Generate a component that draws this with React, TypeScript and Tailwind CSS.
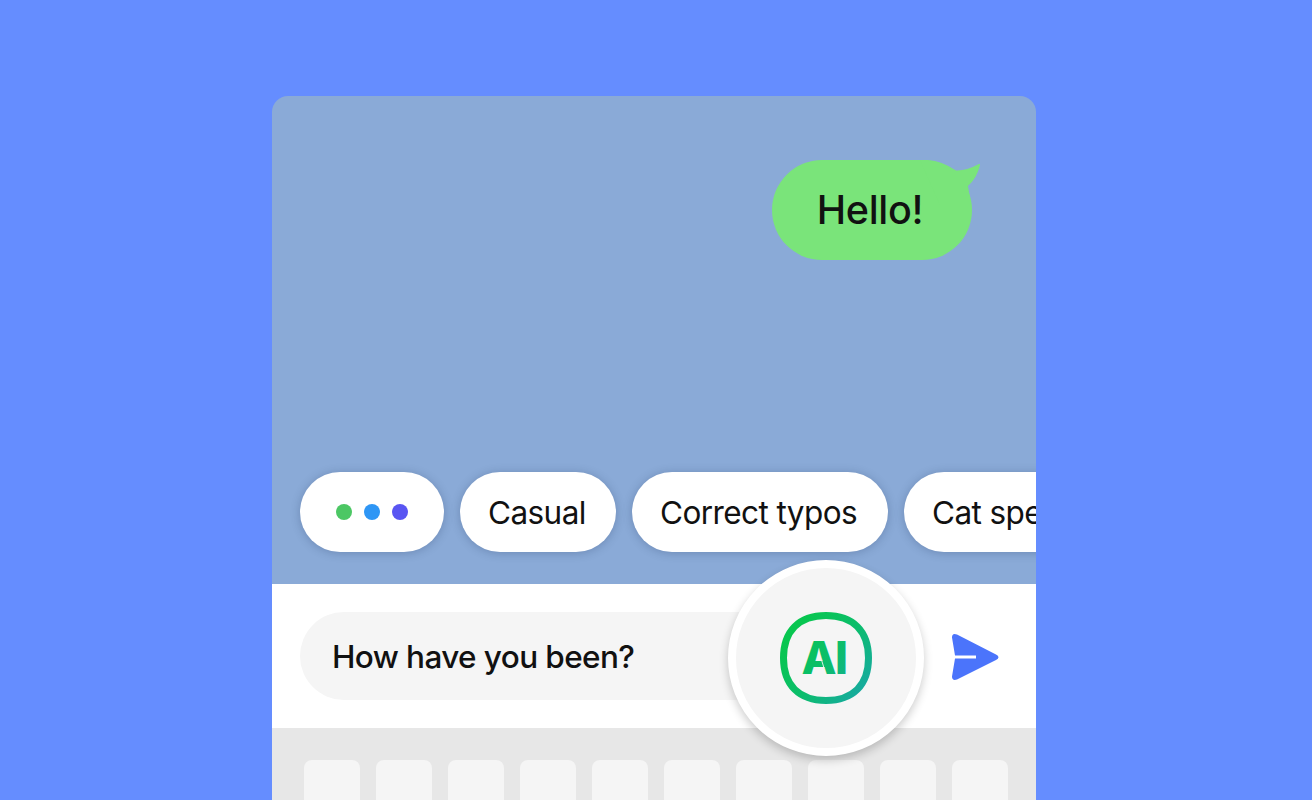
import React from "react";

const keys = Array.from({ length: 10 }, (_, i) => i);

const chipClass =
  "flex h-20 shrink-0 items-center rounded-full bg-white shadow-[0_1px_10px_rgba(20,40,80,0.25)]";

function Chip({ label, size }: { label: string; size: string }) {
  return (
    <button className={`${chipClass} ${size} pl-7 text-[31.5px] leading-10 tracking-[-0.58px] whitespace-nowrap text-[#111]`}>
      <span className="pt-px">{label}</span>
    </button>
  );
}

function AiLogo() {
  return (
    <svg width="92" height="92" viewBox="0 0 92 92" aria-label="AI">
      <defs>
        <linearGradient id="ai" gradientUnits="userSpaceOnUse" x1="12" y1="22" x2="84" y2="80">
          <stop offset="0" stopColor="#08c650" />
          <stop offset="0.5" stopColor="#0bbd6c" />
          <stop offset="1" stopColor="#17aaa0" />
        </linearGradient>
      </defs>
      <path
        d="M46 3.500C73 3.500 88.500 19 88.500 46S73 88.500 46 88.500S3.500 73 3.500 46S19 3.500 46 3.500Z"
        fill="none"
        stroke="url(#ai)"
        strokeWidth="7"
      />
      <text
        x="21.500 55"
        y="62"
        fill="url(#ai)"
        fontFamily="Inter, sans-serif"
        fontSize="45.5"
        fontWeight="800"
      >
        AI
      </text>
      <path d="M41.500 48L44 56" stroke="#f5f5f5" strokeWidth="0.9" />
    </svg>
  );
}

export default function App() {
  return (
    <div className="flex h-[800px] w-[1312px] overflow-hidden bg-[#658dff] pt-24 pl-68 font-[Inter,sans-serif] text-[#111]">
      <main className="flex h-[704px] w-[764px] flex-col overflow-hidden rounded-t-2xl bg-[#8aaad7]">
        <section className="flex h-[488px] shrink-0 flex-col justify-between pt-16 pb-8">
          <div className="relative mr-16 flex h-[100px] w-[200px] items-center justify-center self-end rounded-full bg-[#7ae47a] pr-1">
            <svg className="absolute top-0 right-[-8px]" width="60" height="50" viewBox="0 0 60 50">
              <path d="M0 0H8Q22 1 36 10.500Q46 11 59 4Q60.500 3.500 60 5Q57 18 48 26L51 45L20 45Z" fill="#7ae47a" />
            </svg>
            <span className="relative text-[39.5px] leading-12 font-[450] tracking-[-0.3px]">Hello!</span>
          </div>
          <div className="flex gap-4 pl-7">
            <div className={`${chipClass} w-36 justify-center gap-3`}>
              <i className="size-4 rounded-full bg-[#4cc764]" />
              <i className="size-4 rounded-full bg-[#2e96f5]" />
              <i className="size-4 rounded-full bg-[#5955f2]" />
            </div>
            <Chip label="Casual" size="w-[156px]" />
            <Chip label="Correct typos" size="w-64" />
            <Chip label="Cat speak" size="w-52" />
          </div>
        </section>
        <section className="relative flex h-36 shrink-0 items-center bg-white pl-7">
          <div className="flex h-[88px] w-[580px] items-center rounded-full bg-[#f5f5f5] pl-8">
            <span className="pt-px text-[31.5px] leading-10 font-[450] tracking-[-0.6px]">How have you been?</span>
          </div>
          <button className="absolute top-[-24px] left-[456px] flex size-[196px] items-center justify-center rounded-full border-8 border-white bg-[#f5f5f5] shadow-[0_4px_10px_rgba(0,0,0,0.2)]">
            <AiLogo />
          </button>
          <svg className="ml-[64px]" width="56" height="56" viewBox="0 0 56 56">
            <path
              d="M8 9.500Q8 4.500 13 6.500L52 26.500Q57 29 52 32L13 51.500Q8 53 8 48.500L11 30.500H32V27.500H11Z"
              fill="#4b74fb"
            />
          </svg>
        </section>
        <section className="flex flex-1 gap-4 bg-[#e7e7e7] pt-8 pl-8">
          {keys.map((key) => (
            <div key={key} className="h-20 w-14 shrink-0 rounded-lg bg-[#f5f5f5]" />
          ))}
        </section>
      </main>
    </div>
  );
}
